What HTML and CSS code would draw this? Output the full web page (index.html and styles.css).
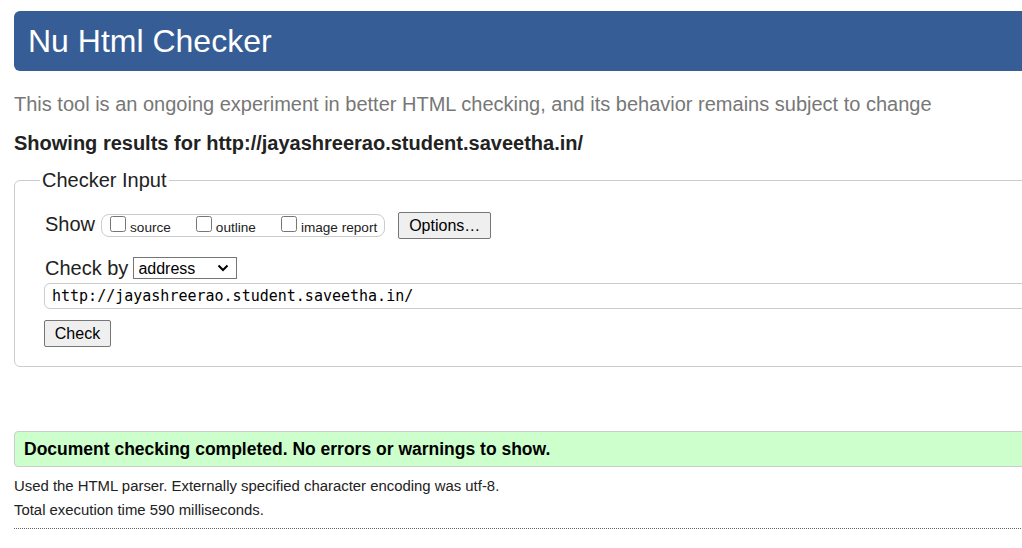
FILE: index.html
```html
<!DOCTYPE html>
<html lang="en">
<head>
<meta charset="utf-8">
<title>Nu Html Checker</title>
<link rel="stylesheet" href="styles.css">
</head>
<body>
<div class="page">
  <h1 class="banner">Nu Html Checker</h1>
  <p class="tagline">This tool is an ongoing experiment in better HTML checking, and its behavior remains subject to change</p>
  <p class="showing">Showing results for http://jayashreerao.student.saveetha.in/</p>
  <form class="checker">
    <fieldset class="box">
      <legend class="box-legend">Checker Input</legend>
      <div class="row show-row">
        <span class="row-label show-label">Show</span>
        <span class="pill">
          <label class="opt"><input type="checkbox" class="cb"><span class="opt-text">source</span></label>
          <label class="opt"><input type="checkbox" class="cb"><span class="opt-text">outline</span></label>
          <label class="opt"><input type="checkbox" class="cb"><span class="opt-text">image report</span></label>
        </span>
        <button type="button" class="btn btn-options">Options…</button>
      </div>
      <div class="row checkby-row">
        <span class="row-label">Check by</span>
        <select class="sel"><option>address</option></select>
      </div>
      <input type="text" class="url" value="http://jayashreerao.student.saveetha.in/">
      <div class="submit-row">
        <button type="button" class="btn btn-check">Check</button>
      </div>
    </fieldset>
  </form>
  <p class="success">Document checking completed. No errors or warnings to show.</p>
  <p class="details">Used the HTML parser. Externally specified character encoding was utf-8.</p>
  <p class="details">Total execution time 590 milliseconds.</p>
  <hr class="rule">
</div>
</body>
</html>
```
FILE: styles.css
```css
html, body {
  margin: 0;
  padding: 0;
  overflow: hidden;
  background: #fff;
}

body {
  font-family: "Liberation Sans", Arial, sans-serif;
  color: #222;
}

.page {
  margin-left: 14px;
  width: 1100px;
}

.banner {
  margin: 11px 0 0 0;
  height: 60px;
  line-height: 60px;
  padding-left: 14px;
  font-size: 32px;
  font-weight: normal;
  color: #fff;
  background: #365d95;
  border-radius: 6px;
}

.tagline {
  margin: 21px 0 0 0;
  font-size: 20px;
  line-height: 24px;
  color: #777;
}

.showing {
  margin: 15px 0 0 0;
  font-size: 20px;
  line-height: 24px;
  font-weight: bold;
  color: #222;
}

.checker {
  margin: 13px 0 0 0;
}

.box {
  margin: 0;
  padding: 0 0 19px 30px;
  border: 1px solid #ccc;
  border-radius: 6px;
  min-width: 0;
}

.box-legend {
  margin-left: -5px;
  padding: 0 2px;
  font-size: 20px;
  line-height: 24px;
  color: #222;
}

.row {
  display: flex;
  align-items: center;
}

.row-label {
  font-size: 20px;
  line-height: 24px;
}

.show-label {
  margin-bottom: 3px;
}

.show-row {
  margin-top: 20px;
  height: 27px;
}

.pill {
  display: flex;
  align-items: center;
  box-sizing: border-box;
  height: 23px;
  margin-left: 6px;
  padding: 0 7px 0 8px;
  border: 1px solid #ccc;
  border-radius: 8px;
}

.opt {
  display: flex;
  align-items: baseline;
  margin-right: 25px;
  font-size: 13.6px;
  color: #222;
}

.opt:last-child {
  margin-right: 0;
}

.cb {
  width: 16px;
  height: 16px;
  margin: 0 4px 0 0;
}

.opt-text {
  line-height: 16px;
}

.btn {
  box-sizing: border-box;
  height: 27px;
  font-family: "Liberation Sans", Arial, sans-serif;
  font-size: 16px;
  color: #000;
  background: #efefef;
  border: 1px solid #767676;
  border-radius: 2px;
}

.btn-options {
  margin-left: 13px;
  width: 93px;
  padding: 0;
}

.checkby-row {
  margin-top: 17px;
  height: 24px;
}

.sel {
  box-sizing: border-box;
  width: 104px;
  height: 22px;
  margin-left: 5px;
  padding: 0 0 0 4px;
  font-family: "Liberation Sans", Arial, sans-serif;
  font-size: 16px;
  color: #000;
  -webkit-appearance: none;
  appearance: none;
  background-color: #fff;
  background-image: url("data:image/svg+xml;utf8,<svg xmlns='http://www.w3.org/2000/svg' width='12' height='8' viewBox='0 0 12 8'><path d='M1.5 1.5 L6 6 L10.5 1.5' fill='none' stroke='%23000' stroke-width='2'/></svg>");
  background-repeat: no-repeat;
  background-position: right 7px center;
  background-size: 12px 8px;
  border: 1px solid #767676;
  border-radius: 0;
}

.url {
  display: block;
  box-sizing: border-box;
  width: 1040px;
  height: 26px;
  margin: 3px 0 0 -1px;
  padding: 0 0 0 7px;
  font-family: "DejaVu Sans Mono", "Liberation Mono", monospace;
  font-size: 15px;
  color: #000;
  border: 1px solid #ccc;
  border-radius: 6px;
}

.submit-row {
  margin-top: 11px;
  margin-left: -1px;
}

.btn-check {
  width: 67px;
  padding: 0;
}

.success {
  margin: 64px 0 0 0;
  padding-left: 9px;
  height: 34px;
  line-height: 34px;
  font-size: 17.5px;
  font-weight: bold;
  color: #000;
  background: #ccffcc;
  border: 1px solid #ccc;
  border-radius: 4px;
}

.details {
  margin: 0;
  font-size: 14.9px;
  line-height: 24px;
  color: #222;
}

.success + .details {
  margin-top: 7px;
}

.rule {
  margin: 6px 0 0 0;
  width: 1007px;
  height: 0;
  border: 0;
  border-top: 1px dotted #666;
}
```
